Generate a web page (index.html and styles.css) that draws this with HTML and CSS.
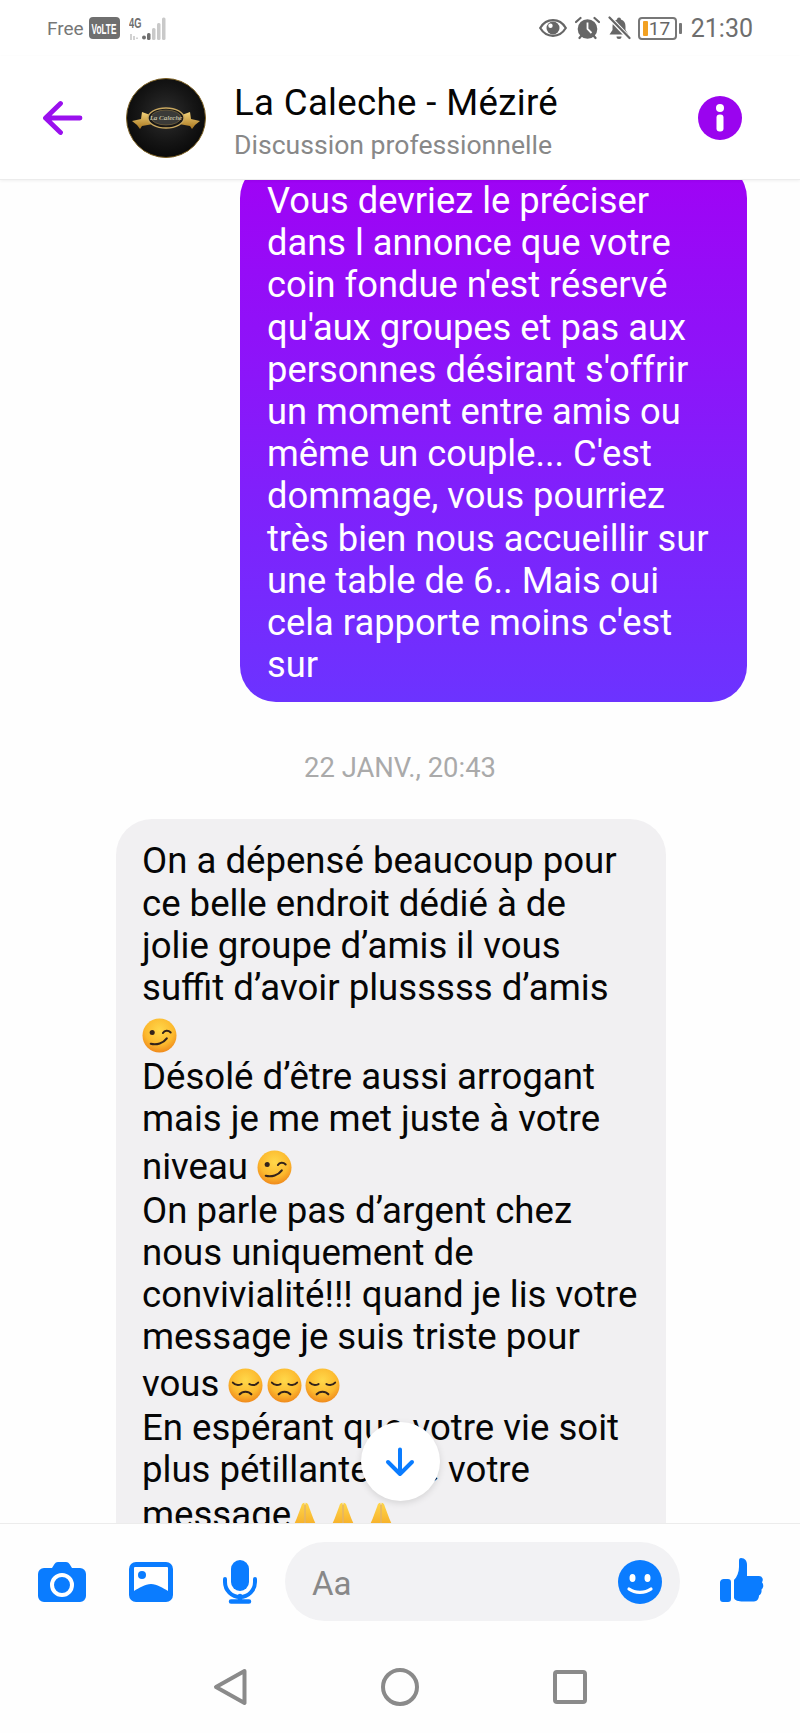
FILE: index.html
```html
<!DOCTYPE html>
<html lang="fr">
<head>
<meta charset="utf-8">
<title>La Caleche - Méziré</title>
<link rel="stylesheet" href="styles.css">
</head>
<body>
<svg class="defs" aria-hidden="true">
  <defs>
    <radialGradient id="face" cx="50%" cy="35%" r="65%">
      <stop offset="0" stop-color="#ffd84a"/>
      <stop offset=".65" stop-color="#fcb92e"/>
      <stop offset="1" stop-color="#f08a1c"/>
    </radialGradient>
    <linearGradient id="hands" x1="0" y1="0" x2="0" y2="1">
      <stop offset="0" stop-color="#ffd64a"/>
      <stop offset="1" stop-color="#f4a622"/>
    </linearGradient>
    <linearGradient id="gold" x1="0" y1="0" x2="0" y2="1">
      <stop offset="0" stop-color="#f3d27a"/>
      <stop offset="1" stop-color="#a8761e"/>
    </linearGradient>
    <symbol id="wink" viewBox="0 0 36 36">
      <circle cx="18" cy="18" r="17.5" fill="url(#face)"/>
      <circle cx="10.5" cy="15" r="2.6" fill="#33231a"/>
      <path d="M21.500 15.500c1.800-3 5.500-3.200 8-.6" fill="none" stroke="#33231a" stroke-width="2" stroke-linecap="round"/>
      <path d="M9 26.500c6 1.500 13-.5 16.500-5.500" fill="none" stroke="#33231a" stroke-width="2.200" stroke-linecap="round"/>
    </symbol>
    <symbol id="pensive" viewBox="0 0 36 36">
      <circle cx="18" cy="18" r="17.500" fill="url(#face)"/>
      <path d="M5 15c2.500 2.800 6 3 9 1.500M22 16.500c3 1.500 6.500 1.300 9-1.500" fill="none" stroke="#33231a" stroke-width="2" stroke-linecap="round"/>
      <path d="M12 27c3-3.500 9-3.500 12 0" fill="none" stroke="#33231a" stroke-width="2.200" stroke-linecap="round"/>
    </symbol>
    <symbol id="pray" viewBox="0 0 30 36" preserveAspectRatio="none">
      <path d="M14.500 1c-2 0-3 2-3.500 4L6 20l-3.500 9 6 5 6-5z" fill="url(#hands)"/>
      <path d="M15.500 1c2 0 3 2 3.500 4l5 15 3.500 9-6 5-6-5z" fill="url(#hands)"/>
      <path d="M1 29l8 6H1zM29 29l-8 6h8z" fill="#4f86c4"/>
      <path d="M15 3v26" stroke="#d9901c" stroke-width="1"/>
    </symbol>
  </defs>
</svg>

<div class="phone">
  <div class="status">
    <div class="status-side">
      <span class="carrier">Free</span>
      <svg class="volte" viewBox="0 0 31 22" width="31" height="22">
        <rect width="31" height="22" rx="4" fill="#6f6f6f"/>
        <text transform="translate(2.500 16.500) scale(.55 1)" class="volte-text">VoLTE</text>
      </svg>
      <svg class="signal" viewBox="0 0 37 26" width="37" height="26">
        <text transform="translate(0 13) scale(.62 1)" class="net">4G</text>
        <path d="M2 19v6M5 21v4M8 22.500v1.500" stroke="#d2d2d2" stroke-width="2"/>
        <circle cx="15" cy="22.500" r="2" fill="#6f6f6f"/>
        <rect x="18" y="18" width="3.500" height="7" rx="1.500" fill="#6f6f6f"/>
        <rect x="23" y="13" width="3.500" height="12" rx="1.500" fill="#c9c9c9"/>
        <rect x="28" y="8" width="3.500" height="17" rx="1.500" fill="#c9c9c9"/>
        <rect x="33" y="2.500" width="3.500" height="22.500" rx="1.500" fill="#c9c9c9"/>
      </svg>
    </div>
    <div class="status-side">
      <svg class="st-eye" viewBox="0 0 28 18" width="28" height="18">
        <path d="M1.200 9C4.500 3.500 9 1.200 14 1.200S23.500 3.500 26.800 9C23.500 14.500 19 16.800 14 16.800S4.500 14.500 1.200 9z" fill="none" stroke="#666" stroke-width="2.200"/>
        <circle cx="14" cy="9" r="6.500" fill="#666"/>
        <circle cx="11.500" cy="6.800" r="2.200" fill="#fff"/>
      </svg>
      <svg class="st-alarm" viewBox="0 0 25 24" width="25" height="24">
        <circle cx="12.500" cy="13" r="9.800" fill="#666"/>
        <path d="M12.500 6.500V13l4 4" fill="none" stroke="#fff" stroke-width="1.800"/>
        <path d="M1 6l4.500-4M24 6l-4.500-4M4.500 22l2-2.500M20.500 22l-2-2.500" stroke="#666" stroke-width="2.200" stroke-linecap="round"/>
      </svg>
      <svg class="st-bell" viewBox="0 0 24 24" width="24" height="24">
        <path d="M12 1.500a2 2 0 0 1 2 2c3 1 4.500 3.500 4.500 7v3.500l3 4.500H2.500l3-4.500v-3.500c0-3.500 1.500-6 4.500-7a2 2 0 0 1 2-2z" fill="#666"/>
        <path d="M9.500 20.500h5a2.500 2.500 0 0 1-5 0z" fill="#666"/>
        <path d="M3 2l19 20" stroke="#fff" stroke-width="4.500"/>
        <path d="M2.500 1.500l20 20.500" stroke="#666" stroke-width="2.200" stroke-linecap="round"/>
      </svg>
      <span class="battery"><span class="battery-level"></span><span class="battery-num">17</span></span>
      <span class="battery-nub"></span>
      <span class="clock">21:30</span>
    </div>
  </div>

  <header class="header">
    <svg class="back" viewBox="0 0 40 36" width="40" height="36">
      <path d="M37 18H4M17.500 3.500 2.500 18l15 14.500" fill="none" stroke="#9a10ee" stroke-width="4.800" stroke-linecap="round" stroke-linejoin="round"/>
    </svg>
    <svg class="avatar" viewBox="0 0 80 80" width="80" height="80">
      <defs>
        <radialGradient id="avbg" cx="50%" cy="45%" r="60%">
          <stop offset="0" stop-color="#2e2e2e"/>
          <stop offset=".6" stop-color="#151515"/>
          <stop offset="1" stop-color="#070707"/>
        </radialGradient>
      </defs>
      <circle cx="40" cy="40" r="39.500" fill="url(#avbg)" stroke="#7b5f22" stroke-width="1"/>
      <path d="M6 43l9-2 1-7 11 4v8l-11 2-2 3-3-4z" fill="url(#gold)"/>
      <path d="M74 43l-9-2-1-7-11 4v8l11 2 2 3 3-4z" fill="url(#gold)"/>
      <ellipse cx="40" cy="40" rx="18" ry="10" fill="#161616" stroke="#c9a860" stroke-width="1.300"/>
      <ellipse cx="40" cy="39.500" rx="15" ry="7.500" fill="#3a3a38" stroke="#8a7444" stroke-width=".6"/>
      <text x="40" y="42" class="av-name">La Caleche</text>
    </svg>
    <div class="header-text">
      <div class="title">La Caleche - Méziré</div>
      <div class="subtitle">Discussion professionnelle</div>
    </div>
    <svg class="info" viewBox="0 0 44 44" width="44" height="44">
      <circle cx="22" cy="22" r="22" fill="#9a04ef"/>
      <circle cx="22" cy="12" r="4" fill="#fff"/>
      <rect x="18.500" y="18.500" width="7" height="17" rx="3" fill="#fff"/>
    </svg>
  </header>

  <main class="thread">
    <div class="bubble bubble-out">Vous devriez le préciser<br>dans l annonce que votre<br>coin fondue n'est réservé<br>qu'aux groupes et pas aux<br>personnes désirant s'offrir<br>un moment entre amis ou<br>même un couple... C'est<br>dommage, vous pourriez<br>très bien nous accueillir sur<br>une table de 6.. Mais oui<br>cela rapporte moins c'est<br>sur</div>
    <div class="stamp">22 JANV., 20:43</div>
    <div class="bubble bubble-in">On a dépensé beaucoup pour<br>ce belle endroit dédié à de<br>jolie groupe d’amis il vous<br>suffit d’avoir plusssss d’amis<br><svg class="emoji emoji-solo"><use href="#wink"/></svg><br>Désolé d’être aussi arrogant<br>mais je me met juste à votre<br>niveau <svg class="emoji emoji-inline"><use href="#wink"/></svg><br>On parle pas d’argent chez<br>nous uniquement de<br>convivialité!!! quand je lis votre<br>message je suis triste pour<br>vous <svg class="emoji emoji-sad"><use href="#pensive"/></svg><svg class="emoji emoji-sad"><use href="#pensive"/></svg><svg class="emoji emoji-sad"><use href="#pensive"/></svg><br>En espérant que votre vie soit<br>plus pétillante que votre<br>message<svg class="emoji-pray"><use href="#pray"/></svg><svg class="emoji-pray"><use href="#pray"/></svg><svg class="emoji-pray"><use href="#pray"/></svg></div>
    <div class="scroll-down">
      <svg viewBox="0 0 30 30" width="30" height="30">
        <path d="M15 2.500v24.500M3 15l12 12 12-12" fill="none" stroke="#0a7cff" stroke-width="4" stroke-linecap="round" stroke-linejoin="round"/>
      </svg>
    </div>
  </main>

  <footer class="composer">
    <svg class="c-camera" viewBox="0 0 48 40" width="48" height="40">
      <path d="M6 6h8l2.500-4A4 4 0 0 1 20 0h8a4 4 0 0 1 3.500 2L34 6h8a6 6 0 0 1 6 6v22a6 6 0 0 1-6 6H6a6 6 0 0 1-6-6V12a6 6 0 0 1 6-6z" fill="#0a7cff"/>
      <circle cx="24" cy="23" r="10" fill="none" stroke="#fff" stroke-width="4"/>
    </svg>
    <svg class="c-image" viewBox="0 0 44 40" width="44" height="40">
      <rect width="44" height="40" rx="7" fill="#0a7cff"/>
      <path d="M5 6a1 1 0 0 1 1-1h32a1 1 0 0 1 1 1v23c-5-3-11-7-17-7s-12 4-17 7z" fill="#fff"/>
      <circle cx="13" cy="13" r="4" fill="#0a7cff"/>
    </svg>
    <svg class="c-mic" viewBox="0 0 34 44" width="34" height="44">
      <rect x="8" y="0" width="18" height="31" rx="9" fill="#0a7cff"/>
      <path d="M2 19v3a15 15 0 0 0 30 0v-3" fill="none" stroke="#0a7cff" stroke-width="4" stroke-linecap="round"/>
      <path d="M17 36v5M8 41.500h18" stroke="#0a7cff" stroke-width="4.500" stroke-linecap="round"/>
    </svg>
    <div class="pill">
      <span class="aa">Aa</span>
      <svg viewBox="0 0 44 44" width="44" height="44">
        <circle cx="22" cy="22" r="22" fill="#0a7cff"/>
        <ellipse cx="14.500" cy="18" rx="3" ry="4" fill="#fff"/>
        <ellipse cx="29.500" cy="18" rx="3" ry="4" fill="#fff"/>
        <path d="M11 29c6 4.500 16 4.500 22 0" fill="none" stroke="#fff" stroke-width="3.200" stroke-linecap="round"/>
      </svg>
    </div>
    <svg class="c-thumb" viewBox="0 0 44 46" width="44" height="46">
      <path d="M4 21h4a3 3 0 0 1 3 3v17a3 3 0 0 1-3 3H3a3 3 0 0 1-3-3V24a4 4 0 0 1 4-3z" fill="#0a7cff"/>
      <path d="M21 0c4 0 6 3 6 7v11h12a4 4 0 0 1 3 6.500c1.500 1 2 5-.5 7 .5 2.500-.5 5-2.500 6 0 3-2 6-5 6H23c-4 0-9-1-9-4V22c3-3 5-8 5-13V3c0-2 .5-3 2-3z" fill="#0a7cff"/>
    </svg>
  </footer>

  <nav class="navbar">
    <svg viewBox="0 0 34 38" width="34" height="38">
      <path d="M31.500 3 3 19l28.500 16z" fill="none" stroke="#8a8a8a" stroke-width="4" stroke-linejoin="round"/>
    </svg>
    <svg viewBox="0 0 38 38" width="38" height="38">
      <circle cx="19" cy="19" r="17" fill="none" stroke="#8a8a8a" stroke-width="4"/>
    </svg>
    <svg viewBox="0 0 34 34" width="34" height="34">
      <rect x="2" y="2" width="30" height="30" rx="2" fill="none" stroke="#8a8a8a" stroke-width="4"/>
    </svg>
  </nav>
</div>
</body>
</html>
```

FILE: styles.css
```css
* { box-sizing: border-box; }

html, body { margin: 0; padding: 0; }

body {
  font-family: "Roboto", "Noto Sans", sans-serif;
  background: #fefefe;
  color: #000;
}

.defs { display: block; width: 0; height: 0; }

.phone {
  width: 800px;
  height: 1733px;
  display: flex;
  flex-direction: column;
  overflow: hidden;
  background: #fefefe;
}

/* Status bar */
.status {
  height: 56px;
  flex: none;
  display: flex;
  align-items: center;
  justify-content: space-between;
  padding: 0 47px;
  background: #fff;
  color: #6e6e6e;
}

.status-side { display: flex; align-items: center; }

.carrier { font-size: 19px; color: #777; }

.volte { margin-left: 5px; flex: none; }

.volte-text {
  font-family: "Liberation Sans", sans-serif;
  font-size: 15px;
  font-weight: 700;
  fill: #fff;
}

.signal { margin-left: 9px; flex: none; }

.net {
  font-family: "Liberation Sans", sans-serif;
  font-size: 15px;
  font-weight: 700;
  fill: #6f6f6f;
}

.st-eye { margin-right: 8px; }
.st-alarm { margin-right: 7px; }
.st-bell { margin-right: 7px; }

.battery {
  width: 39px;
  height: 23px;
  border: 2px solid #777;
  border-radius: 4px;
  display: flex;
  align-items: center;
  padding-left: 3px;
}

.battery-level {
  width: 5px;
  height: 15px;
  border-radius: 1px;
  background: #f2a122;
  flex: none;
}

.battery-num {
  font-size: 19px;
  line-height: 19px;
  color: #666;
  margin-left: 1px;
}

.battery-nub {
  width: 3px;
  height: 11px;
  margin-left: 2px;
  border-radius: 1px;
  background: #777;
}

.clock { margin-left: 9px; font-size: 25px; color: #6e6e6e; }

/* Header */
.header {
  position: relative;
  z-index: 2;
  height: 124px;
  flex: none;
  display: flex;
  align-items: center;
  padding: 0 58px 0 43px;
  background: #fff;
  border-bottom: 1px solid #ececec;
  box-shadow: 0 1px 3px rgba(0, 0, 0, 0.06);
}

.back { flex: none; }

.avatar { flex: none; margin-left: 43px; }

.header-text { flex: 1; margin-left: 28px; padding-top: 6px; }

.title { font-size: 36.6px; line-height: 44px; letter-spacing: 0.35px; color: #050505; }

.subtitle { font-size: 26.6px; line-height: 32px; margin-top: 4px; color: #888; }

.info { flex: none; }

.av-name {
  font-family: "Liberation Serif", serif;
  font-style: italic;
  font-size: 7px;
  text-anchor: middle;
  fill: #e8e2c8;
}

/* Thread */
.thread {
  position: relative;
  flex: 1;
  min-height: 0;
  overflow: hidden;
  display: flex;
  flex-direction: column;
}

.bubble {
  flex: none;
  line-height: 42.2px;
  border-radius: 36px;
}

.bubble-out {
  align-self: flex-end;
  width: 507px;
  margin: -18px 53px 0 0;
  padding: 18px 20px 16px 27px;
  font-size: 36.3px;
  color: #fff;
  background: linear-gradient(180deg, #a002f5 0%, #6c33ff 100%);
}

.stamp {
  flex: none;
  margin-top: 50px;
  text-align: center;
  font-size: 27.4px;
  line-height: 32px;
  color: #aaa;
}

.bubble-in {
  align-self: flex-start;
  width: 550px;
  margin: 35px 0 0 116px;
  padding: 21px 10px 21px 26px;
  font-size: 36.6px;
  background: #f1f0f2;
  color: #060606;
}

.emoji {
  width: 35px;
  height: 35px;
}

/* Emoji rows sit taller than plain text rows; margins give each row its height. */
.emoji-solo { margin: 8.5px 0 2.7px; vertical-align: -8.7px; }
.emoji-inline { margin: 9.5px 0 4.7px; vertical-align: -10.7px; }
.emoji-sad { margin: 9.5px 3.5px 3.7px 0; vertical-align: -10.7px; }

.emoji-pray {
  width: 28px;
  height: 30px;
  margin: 11px 10px 0 0;
  vertical-align: -5px;
}

.scroll-down {
  position: absolute;
  left: 360.5px;
  top: 1242px;
  width: 79px;
  height: 79px;
  border-radius: 50%;
  background: #fff;
  box-shadow: 0 2px 7px rgba(0, 0, 0, 0.12);
  display: flex;
  align-items: center;
  justify-content: center;
}

/* Composer */
.composer {
  position: relative;
  z-index: 2;
  height: 117px;
  flex: none;
  display: flex;
  align-items: flex-start;
  padding: 18px 36px 0 38px;
  border-top: 1px solid #ececec;
  background: #fefefe;
}

.c-camera { flex: none; margin-top: 20px; }
.c-image { flex: none; margin: 20px 0 0 43px; }
.c-mic { flex: none; margin: 18px 0 0 50px; }

.pill {
  flex: none;
  width: 395px;
  height: 79px;
  margin-left: 28px;
  padding: 0 18px 0 27px;
  border-radius: 40px;
  background: #f2f2f4;
  display: flex;
  align-items: center;
  justify-content: space-between;
}

.aa { font-size: 33px; color: #888; padding-top: 4px; }

.c-thumb { flex: none; margin: 16px 0 0 40px; }

/* Navigation */
.navbar {
  flex: none;
  height: 93px;
  display: flex;
  align-items: center;
  justify-content: center;
  gap: 134px;
  background: #fefefe;
}
```
